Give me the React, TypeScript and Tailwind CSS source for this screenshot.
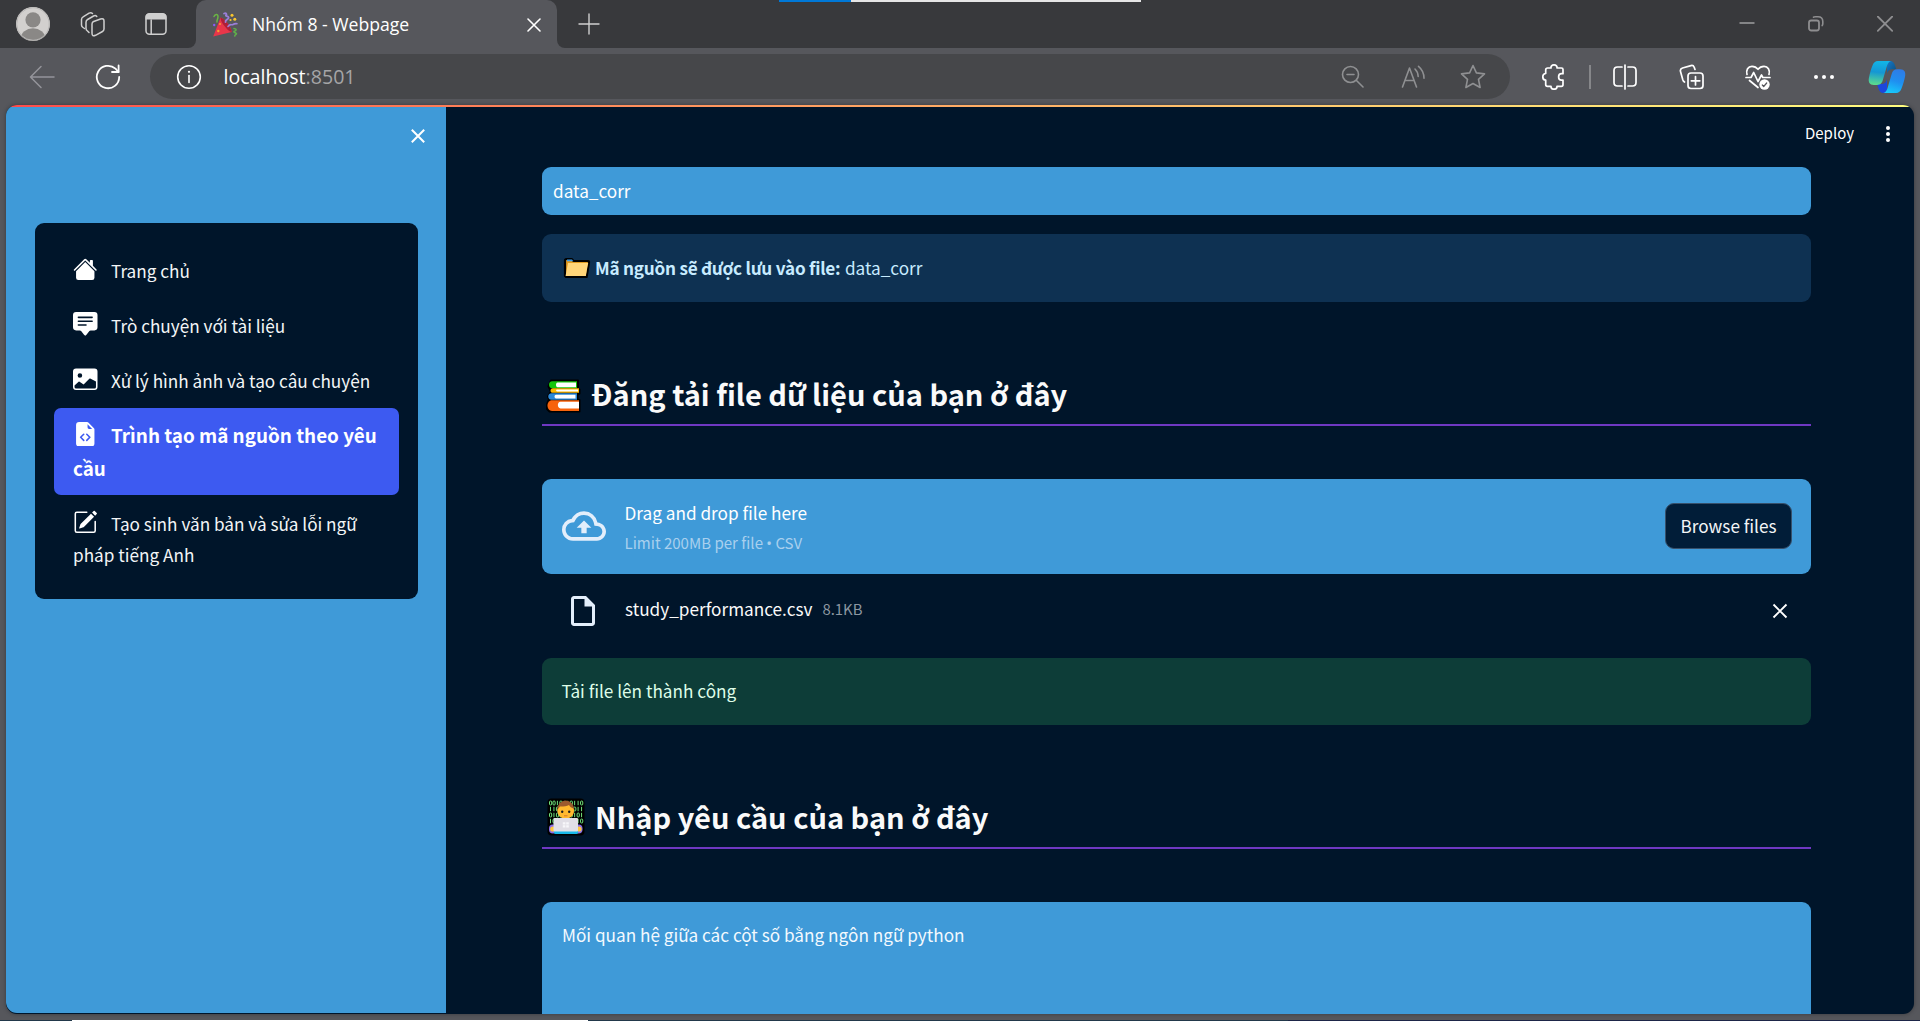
import type { ReactNode } from "react";
import { BsHouseFill, BsChatSquareTextFill, BsImageFill, BsFileEarmarkCodeFill, BsPencilSquare } from "react-icons/bs";
import { MdOutlineBackup, MdOutlineInsertDriveFile } from "react-icons/md";

type IconProps = { w: number; h: number; className?: string; children: ReactNode };

function Glyph({ w, h, className = "", children }: IconProps) {
  return (
    <svg
      width={w}
      height={h}
      viewBox={`0 0 ${w} ${h}`}
      fill="none"
      stroke="currentColor"
      strokeWidth={1.5}
      strokeLinecap="round"
      strokeLinejoin="round"
      className={`shrink-0 ${className}`}
    >
      {children}
    </svg>
  );
}

function Avatar() {
  return (
    <Glyph w={34} h={34} className="ml-4">
      <defs>
        <clipPath id="avatar">
          <circle cx="17" cy="17" r="17" />
        </clipPath>
      </defs>
      <g clipPath="url(#avatar)" stroke="none">
        <rect width="34" height="34" fill="#d2d0ce" />
        <circle cx="17" cy="12.8" r="7.6" fill="#8a8886" />
        <ellipse cx="17" cy="31.5" rx="12.2" ry="10.2" fill="#8a8886" />
      </g>
      <circle cx="17" cy="17" r="16.3" stroke="#b9b8b7" strokeWidth="1" />
    </Glyph>
  );
}

function PartyPopper() {
  return (
    <Glyph w={26} h={26}>
      <path d="M1.2 25.4 8.6 6.4C13 8 18.5 14.5 19.8 21z" fill="#e8364a" stroke="none" />
      <path d="M8.6 6.4C13 8 18.5 14.5 19.8 21c-3-.5-4.500-2.500-6.500-5S8.500 10 8.600 6.400z" fill="#b01f36" stroke="none" />
      <path d="M2 5.500C3 3 6 2.500 6 5.500S4.500 9 5 11" stroke="#6bb544" strokeWidth="1.500" />
      <path d="M12 2.500c2.500-.8 3 .8 2 1.700s3.500 1 2.500 3-3.500 1-3 4" stroke="#9a7fd8" strokeWidth="1.800" />
      <path d="M16 15.500c2.500-3.500 3.500-1 5-2s2.500-1 4-.8" stroke="#9a7fd8" strokeWidth="1.600" />
      <path d="M22 17.500c3 .5 2.500 2 .5 2.700s2 1.800 2 2.600-2 1-1.700 2.200" stroke="#5fae4a" strokeWidth="1.600" />
      <g stroke="none">
        <circle cx="20" cy="4.200" r="1.500" fill="#f8c62f" />
        <circle cx="22.800" cy="8.200" r="1.500" fill="#f8c62f" />
        <circle cx="18.500" cy="9" r="1.100" fill="#f8c62f" />
        <circle cx="6.300" cy="20" r="1.200" fill="#f8a02f" />
        <circle cx="8" cy="13" r="1" fill="#f8a02f" />
        <circle cx="2.200" cy="14" r="1.200" fill="#8b5cf6" />
      </g>
    </Glyph>
  );
}

function Copilot() {
  return (
    <svg width="38" height="34" viewBox="0 0 38 34" className="shrink-0">
      <defs>
        <linearGradient id="cpA" x1="0.3" y1="0" x2="0.2" y2="1">
          <stop offset="0" stopColor="#12b4e6" />
          <stop offset="0.450" stopColor="#1597d4" />
          <stop offset="1" stopColor="#5fe08a" />
        </linearGradient>
        <linearGradient id="cpB" x1="0.700" y1="0" x2="0.400" y2="1">
          <stop offset="0" stopColor="#2f7be6" />
          <stop offset="0.500" stopColor="#1f8ff0" />
          <stop offset="1" stopColor="#18c8fb" />
        </linearGradient>
        <linearGradient id="cpC" x1="0" y1="0" x2="1" y2="1">
          <stop offset="0" stopColor="#1678c8" />
          <stop offset="1" stopColor="#0a4f80" />
        </linearGradient>
      </defs>
      <path d="M19 1h2.500c3.500 0 4.800 2 5.700 5l1 3.200h-3c-4 0-5.200 1.500-6.200 4.500z" fill="url(#cpC)" />
      <path d="M19 33h-3.500c-3 0-4.200-2-5-4.500L9 24h4c4 0 5.200-2 6-5z" fill="#1c46dc" />
      <path d="M10 1h13c-2.500.8-3.500 3-4.500 6.500l-3.600 12.300C14 23 12.500 25 9 25H6c-4.500 0-6-3-5-7.500.8-4 2-8.500 3.500-12C5.600 2.600 7.200 1 10 1z" fill="url(#cpA)" />
      <path d="M28 33H15.500c2.500-.8 3.500-3 4.500-6.500l3.600-12.300C24.500 11 26 9.200 29.500 9.200h2.500c4.500 0 6 3 5 7.500-.8 4-2 8.300-3.500 11.800C32.400 31.400 30.800 33 28 33z" fill="url(#cpB)" />
    </svg>
  );
}

function Folder() {
  return (
    <svg width="30" height="24" viewBox="0 0 30 24" className="shrink-0">
      <path d="M3 20V4.500Q3 3 4.500 3h5.200l1.800 2H26q1.300 0 1 1.500L24.600 21H4z" fill="#e09a1f" stroke="#000" strokeWidth="2.200" strokeLinejoin="round" />
      <path d="M5 3.500h5l1.400 1.700H5z" fill="#3b9be8" />
      <path d="M6 7h20.200l-2.400 13H3.600z" fill="#ffd579" />
    </svg>
  );
}

function Books() {
  return (
    <svg width="35" height="36" viewBox="0 0 35 36" className="shrink-0">
      <path d="M5 2.500h27v8l1.500 1v4L31.500 17v5h2v11.500H3.500L1 31v-5l2-4.500-1-3 3-5-2.500-5z" fill="#000" stroke="#000" strokeWidth="2" strokeLinejoin="round" />
      <path d="M6.500 3.200H31v7H6.500C4 10.200 3 8.500 3 6.700s1-3.500 3.500-3.500z" fill="#16c60c" />
      <path d="M11.500 4.600H30v4.600H11.500c-2 0-2-4.600 0-4.600z" fill="#fff" />
      <path d="M7 10.200h26v4.600H7c-3.300 0-3.300-4.600 0-4.600z" fill="#ffb900" />
      <path d="M11 11.600h21v1.900H11c-1.200 0-1.200-1.900 0-1.900z" fill="#fff" />
      <path d="M5.500 15.300H31v6.400H5.500c-4.300 0-4.300-6.400 0-6.400z" fill="#2b88d8" />
      <path d="M10 16.800h19.500v3.700H10c-2 0-2-3.700 0-3.700z" fill="#fff" />
      <path d="M6 22.200h27V33H6c-2.800 0-4.500-2.500-4.500-5.400S3.200 22.200 6 22.200z" fill="#f7630c" />
      <path d="M14.500 23.800H33v6.600H14.500c-3.500 0-3.500-6.600 0-6.600z" fill="#fff" />
    </svg>
  );
}

const BIT_ROWS = ["0010110110", "1101101011", "0100110101", "1011001010"];

function Technologist() {
  return (
    <svg width="40" height="40" viewBox="0 0 40 40" className="shrink-0">
      <rect x="1.500" y="1.500" width="37" height="37" rx="4" fill="#000" />
      <g stroke="#6fe07a" strokeWidth="1" fill="none">
        {BIT_ROWS.map((row, r) =>
          row.split("").map((bit, c) => {
            const x = 4.5 + c * 3.45;
            const y = 6 + r * 6;
            return bit === "0" ? (
              <rect key={`${r}-${c}`} x={x - 1} y={y - 2} width="2.200" height="4" rx="1" />
            ) : (
              <path key={`${r}-${c}`} d={`M${x} ${y - 2.2}v4.4`} />
            );
          }),
        )}
      </g>
      <rect x="3" y="27.500" width="8" height="9" rx="4" fill="#8b6fe8" />
      <rect x="28.500" y="27.500" width="8" height="9" rx="4" fill="#8b6fe8" />
      <circle cx="6.800" cy="32" r="2.600" fill="#ffc83d" />
      <circle cx="33" cy="32" r="2.600" fill="#ffc83d" />
      <rect x="8" y="32" width="24" height="5" rx="1.500" fill="#19b9ea" />
      <ellipse cx="19.700" cy="12.500" rx="8.500" ry="9" fill="#9b5a2e" />
      <path d="M11.500 13.500c0-1.500.8-2 1.500-2.800.6-.8.800-1.200 1.500-1.200 3.500 0 6.500-.3 8.500-1.500.8 1.500 2 2.500 3.500 3 1.200.5 1.500 1.500 1.500 2.500 0 5-3.500 8-8.300 8s-8.200-3-8.200-8z" fill="#ffb92e" />
      <circle cx="16.200" cy="14.800" r="1.200" fill="#1b1b1b" />
      <circle cx="23.200" cy="14.800" r="1.200" fill="#1b1b1b" />
      <path d="M18 18.800h3.500" stroke="#d8742a" strokeWidth="1" />
      <rect x="7.500" y="21" width="24.500" height="13.500" rx="1" fill="#e1dfe6" />
      <path d="M16.800 25.200h2.600v2.300h-2.600zM20.200 25.200h2.600v2.300h-2.600zM16.800 28.300h2.600v2.300h-2.600zM20.200 28.300h2.600v2.300h-2.600z" fill="#f7f7fa" />
    </svg>
  );
}

function TabStrip() {
  return (
    <div className="relative flex h-12 items-center bg-[#38393c] text-[#cfcfcf]">
      <div className="absolute top-0 left-[779px] flex h-[2px] w-[362px] bg-[#e6e6e6]">
        <div className="w-[72px] bg-[#0078d7]" />
      </div>
      <Avatar />
      <Glyph w={26} h={26} className="ml-[30px]">
        <path d="M4.500 17.500 3 16.500Q1.500 15.500 1.500 14V8.500q0-1.800 1.600-2.700l6-3.600Q11 1.200 12.500 2.500" />
        <path d="M9 21.500 7.500 20Q6 19 6 17.200v-6q0-1.800 1.600-2.700l6-3.500q1.900-1 3.200.5" />
        <path d="M13 10.800l7.500-2.800q3.500-1 3.500 2v8q0 1.700-1.500 2.500l-7 3.800q-3.500 1.500-3.500-2v-9q0-1.800 1-2.500z" />
      </Glyph>
      <Glyph w={24} h={24} className="ml-[38px]">
        <rect x="2" y="1.800" width="20" height="20.400" rx="3.500" />
        <path d="M1.500 7.500V5Q1.500 1.500 5 1.500h14q3.500 0 3.500 3.500v2.500z" fill="#cfcfcf" stroke="none" />
        <path d="M7.200 8v14" />
      </Glyph>
      <div className="ml-[20px] h-2 w-2 self-end bg-[#56575c]">
        <div className="h-full rounded-br-lg bg-[#38393c]" />
      </div>
      <div className="flex h-full w-[361px] items-center rounded-t-[10px] bg-[#56575c] pl-4 text-white">
        <PartyPopper />
        <span className="ml-[14px] w-[158px] font-['Open_Sans','Noto_Sans',sans-serif] text-[17.6px] leading-6 whitespace-nowrap">Nhóm 8 - Webpage</span>
        <Glyph w={14} h={14} className="mt-0.5 ml-[117px]">
          <path d="M1 1l12 12M13 1 1 13" strokeWidth={1.6} />
        </Glyph>
      </div>
      <div className="h-2 w-2 self-end bg-[#56575c]">
        <div className="h-full rounded-bl-lg bg-[#38393c]" />
      </div>
      <Glyph w={22} h={22} className="mb-px ml-[13px]">
        <path d="M11 1v20M1 11h20" strokeWidth={1.4} />
      </Glyph>
      <div className="ml-auto flex items-center pr-[27px] text-[#8e8e90]">
        <Glyph w={16} h={16}>
          <path d="M.5 7h15" strokeWidth={1.8} strokeLinecap="butt" />
        </Glyph>
        <Glyph w={16} h={16} className="ml-[53px]">
          <rect x="1" y="4.500" width="10" height="10" rx="2.200" strokeWidth={1.8} />
          <path d="M5.500 1.200Q6 .8 7.500.8H10q4.800 0 4.800 4.800v2q0 1.300-.6 2" strokeWidth={1.6} />
        </Glyph>
        <Glyph w={16} h={16} className="ml-[53px]">
          <path d="M.8.500l14.400 14.400M15.200.500.8 14.900" strokeWidth={1.8} />
        </Glyph>
      </div>
    </div>
  );
}

function Toolbar() {
  return (
    <div className="flex h-[57px] items-center bg-[#56575c] text-white">
      <Glyph w={26} h={24} className="ml-[29px] text-[#94949a]">
        <path d="M1.500 12H25M12 1.500 1.500 12 12 22.500" />
      </Glyph>
      <Glyph w={26} h={26} className="ml-[40px]">
        <path d="M24.200 13A11.200 11.200 0 1 1 20.500 4.700L23.500 8" strokeWidth={1.8} />
        <path d="M23.600 1.500V8H17" strokeWidth={1.8} />
      </Glyph>
      <div className="ml-[29px] flex h-[45px] w-[1360px] items-center rounded-full bg-[#46474a]">
        <Glyph w={26} h={26} className="ml-[26px]">
          <circle cx="13" cy="13" r="11.300" strokeWidth={1.6} />
          <path d="M13 11.500v7" strokeWidth={1.6} />
          <circle cx="13" cy="7.800" r="1.100" fill="currentColor" stroke="none" />
        </Glyph>
        <span className="ml-[21.5px] font-['Open_Sans','Noto_Sans',sans-serif] text-[19.6px] leading-7">
          localhost<span className="text-[#a5a5a7]">:8501</span>
        </span>
        <div className="ml-auto flex items-center pr-[24px] text-[#8f9092]">
          <Glyph w={24} h={24}>
            <circle cx="10.500" cy="9.500" r="8" strokeWidth={1.6} />
            <path d="M16.500 15.500 23 22M7 9.500h7" strokeWidth={1.6} />
          </Glyph>
          <Glyph w={26} h={24} className="ml-[36px]">
            <path d="M2.500 22 9.500 3l7 19M5 15.500h9" strokeWidth={1.6} />
            <path d="M15 4q3 3 3.200 7.500M18.500 1.300q5.500 4.500 5.500 12" strokeWidth={1.6} />
          </Glyph>
          <Glyph w={26} h={26} className="ml-[34px]">
            <path d="M13 1.500l3.400 7.400 8.100 1-6 5.500 1.600 8.100L13 19.500l-7.100 4 1.600-8.100-6-5.500 8.100-1z" strokeWidth={1.6} />
          </Glyph>
        </div>
      </div>
      <Glyph w={24} h={26} className="ml-[32px]">
        <path d="M3.700 9.500V6q0-2 2-2H9C8.700 2.400 9.800.9 12 .9s3.300 1.500 3 3.100h4.500Q21 4 21 5.500v4.200h-1.500a2.900 3.200 0 0 0 0 6.400H21v4.500q0 1.800-1.600 1.800H15c0 1.800-1.100 2.800-3 2.800s-3-1-3-2.800H5.500q-1.800 0-1.800-1.800v-4.500C1.800 16.100.8 14.800.8 12.800s1-3.200 2.900-3.300z" strokeWidth={1.7} />
      </Glyph>
      <div className="ml-[23px] h-6 w-[2px] bg-[#86878a]" />
      <Glyph w={24} h={26} className="mr-px ml-[22px]">
        <path d="M12 1v24M9 3H4.500Q1 3 1 6.500v12Q1 22 4.500 22H9M15 3h4.500Q23 3 23 6.500v12q0 3.500-3.500 3.500H15" strokeWidth={1.7} />
      </Glyph>
      <Glyph w={26} h={26} className="ml-[41px]">
        <rect x="9" y="9" width="15" height="15.500" rx="3" strokeWidth={1.7} />
        <path d="M16.500 12.500v8.500M12.300 16.800h8.500M16 5.500l-.8-2.300q-.9-2.200-3.200-1.600L3.500 4Q.8 5 1.500 7.500l2.300 8.200q.5 1.600 1.700 2.300" strokeWidth={1.7} />
      </Glyph>
      <Glyph w={26} h={26} className="ml-[40px]">
        <path d="M2 10.500C.8 6 3 2.300 7 2.300c2.500 0 4.500 1 6 3 1.500-2 3.500-3 6-3 4 0 6.200 3.700 5 8.200" strokeWidth={1.7} />
        <path d="M1 13.500h5l2.700-5 4.300 9 3.500-6.500 1.300 2.500H25M4.500 16.500l8.500 7" strokeWidth={1.7} />
        <circle cx="19.500" cy="20.500" r="5.200" fill="#fff" stroke="none" />
        <path d="M17.300 21l1.400 1.500 3-3.500" stroke="#56575c" strokeWidth={1.2} />
      </Glyph>
      <Glyph w={22} h={6} className="ml-[42px]">
        <g fill="currentColor" stroke="none">
          <circle cx="3" cy="3" r="2" />
          <circle cx="11" cy="3" r="2" />
          <circle cx="19" cy="3" r="2" />
        </g>
      </Glyph>
      <div className="ml-[33px]">
        <Copilot />
      </div>
    </div>
  );
}

const ICON = "mr-[13.5px] inline-block size-[24.5px] align-[-3px] text-white";

const MENU: { label: string; icon: ReactNode; active?: boolean }[] = [
  { label: "Trang chủ", icon: <BsHouseFill className={ICON} /> },
  { label: "Trò chuyện với tài liệu", icon: <BsChatSquareTextFill className={ICON} /> },
  { label: "Xử lý hình ảnh và tạo câu chuyện", icon: <BsImageFill className={ICON} /> },
  { label: "Trình tạo mã nguồn theo yêu cầu", icon: <BsFileEarmarkCodeFill className={ICON} />, active: true },
  { label: "Tạo sinh văn bản và sửa lỗi ngữ pháp tiếng Anh", icon: <BsPencilSquare className={ICON} /> },
];

function Sidebar() {
  return (
    <aside className="h-[906px] w-[440px] shrink-0 rounded-bl-[11px] bg-[#3f9ad8]">
      <div className="flex h-[116px] justify-end pt-[22px] pr-[21px] text-white">
        <Glyph w={14} h={14}>
          <path d="M.8.800l12.400 12.400M13.200.800.8 13.200" strokeWidth={2} strokeLinecap="butt" />
        </Glyph>
      </div>
      <nav className="ml-[29px] h-[376px] w-[383px] rounded-[9px] bg-[#00152a] px-[19px] pt-[20px]">
        {MENU.map((m, i) =>
          m.active ? (
            <div key={m.label} className="h-[87px] rounded-[7px] bg-[#3d5af1] px-[19px] pt-[10px] text-[18.88px] leading-[33px] font-bold text-white">
              {m.icon}
              {m.label}
            </div>
          ) : (
            <div
              key={m.label}
              className={`px-[19px] text-[17.2px] leading-[31px] text-[#f3f5f7] ${i < 3 ? "pt-[12px] pb-[12px]" : "pt-[13px] pb-[11px]"}`}
            >
              {m.icon}
              {m.label}
            </div>
          ),
        )}
      </nav>
    </aside>
  );
}

function Heading({ icon, children }: { icon: ReactNode; children: ReactNode }) {
  return (
    <h2 className="mt-[71px] flex h-[53px] items-start border-b-2 border-[#6f38c2] pl-1 text-[29px] leading-10 font-bold text-[#fafafa]">
      {icon}
      <span className="whitespace-nowrap">{children}</span>
    </h2>
  );
}

function Main() {
  return (
    <main className="min-w-0 flex-1 pr-[103px] pl-[96px] text-[17.2px]">
      <div className="-mr-[76px] flex h-[60px] items-center justify-end pb-[7px] text-[15px] text-white">
        <span>Deploy</span>
        <Glyph w={6} h={18} className="mr-[-4px] ml-[31px]">
          <g fill="currentColor" stroke="none">
            <circle cx="3" cy="3" r="2" />
            <circle cx="3" cy="9" r="2" />
            <circle cx="3" cy="15" r="2" />
          </g>
        </Glyph>
      </div>
      <div className="flex h-12 items-center rounded-[9px] bg-[#3f9ad8] pl-[11px] text-white">data_corr</div>
      <div className="mt-[19px] flex h-[68px] items-center rounded-[9px] bg-[#0e3152] pl-[20px] text-[#c7ebff]">
        <Folder />
        <span className="ml-[3px] font-bold tracking-[-0.25px]">Mã nguồn sẽ được lưu vào file:</span>
        <span className="ml-[4.5px]">data_corr</span>
      </div>
      <Heading
        icon={
          <div className="mt-[5px] mr-[10px]">
            <Books />
          </div>
        }
      >
        Đăng tải file dữ liệu của bạn ở đây
      </Heading>
      <div className="mt-[53px] flex h-[95px] items-center rounded-[9px] bg-[#3f9ad8] pr-[19px] pl-[20px]">
        <MdOutlineBackup className="mb-[2px] size-[44px] text-[#e3eefb]" />
        <div className="mt-0.5 ml-[18.5px] leading-[30px]">
          <div className="text-white">Drag and drop file here</div>
          <div className="text-[15.05px] text-[#a9d0ee]">
            Limit 200MB per file <span className="font-['Noto_Sans']">•</span> CSV
          </div>
        </div>
        <button className="mb-[2px] ml-auto h-[46px] w-[127px] rounded-[9px] border border-[#37506b] bg-[#011d38] text-[#f3f5f7]">Browse files</button>
      </div>
      <div className="flex h-[84px] items-center pr-[23px] pb-[10px] pl-[23px]">
        <MdOutlineInsertDriveFile className="size-[36px] text-[#e3eefb]" />
        <span className="-mt-[5px] ml-[24px] text-[#fafafa]">study_performance.csv</span>
        <span className="-mt-[4px] ml-[10px] text-[14.9px] text-[#8c97a1]">8.1KB</span>
        <Glyph w={16} h={16} className="ml-auto text-white">
          <path d="M1.500 1.500l13 13M14.500 1.500l-13 13" strokeWidth={1.9} strokeLinecap="butt" />
        </Glyph>
      </div>
      <div className="flex h-[67px] items-center rounded-[9px] bg-[#0d3d38] pb-px pl-[19.5px] text-[#dffde9]">Tải file lên thành công</div>
      <Heading
        icon={
          <div className="mt-px mr-[9px]">
            <Technologist />
          </div>
        }
      >
        Nhập yêu cầu của bạn ở đây
      </Heading>
      <div className="mt-[53px] h-[112px] rounded-t-[9px] bg-[#3f9ad8] pt-[17px] pl-[20px] leading-[31px] text-[#f3f9fe]">
        Mối quan hệ giữa các cột số bằng ngôn ngữ python
      </div>
    </main>
  );
}

export default function App() {
  return (
    <div className="flex h-[1021px] w-[1920px] flex-col overflow-hidden bg-[#56575c] font-['Noto_Sans_CJK_SC','Noto_Sans',sans-serif]">
      <TabStrip />
      <Toolbar />
      <div className="mx-1.5 flex h-[909px] flex-col overflow-hidden rounded-[11px] bg-[#00152a] shadow-[0_0_4px_rgba(0,0,0,0.35)]">
        <div className="h-[2px] shrink-0 bg-linear-to-r from-[#ff4b4b] to-[#fffd80]" />
        <div className="flex min-h-0 flex-1">
          <Sidebar />
          <Main />
        </div>
      </div>
      <div className="mt-[6px] flex h-px bg-[#22384a]">
        <div className="ml-[72px] w-[516px] bg-white" />
        <div className="ml-[700px] flex-1 bg-[#1d2547]" />
      </div>
    </div>
  );
}
